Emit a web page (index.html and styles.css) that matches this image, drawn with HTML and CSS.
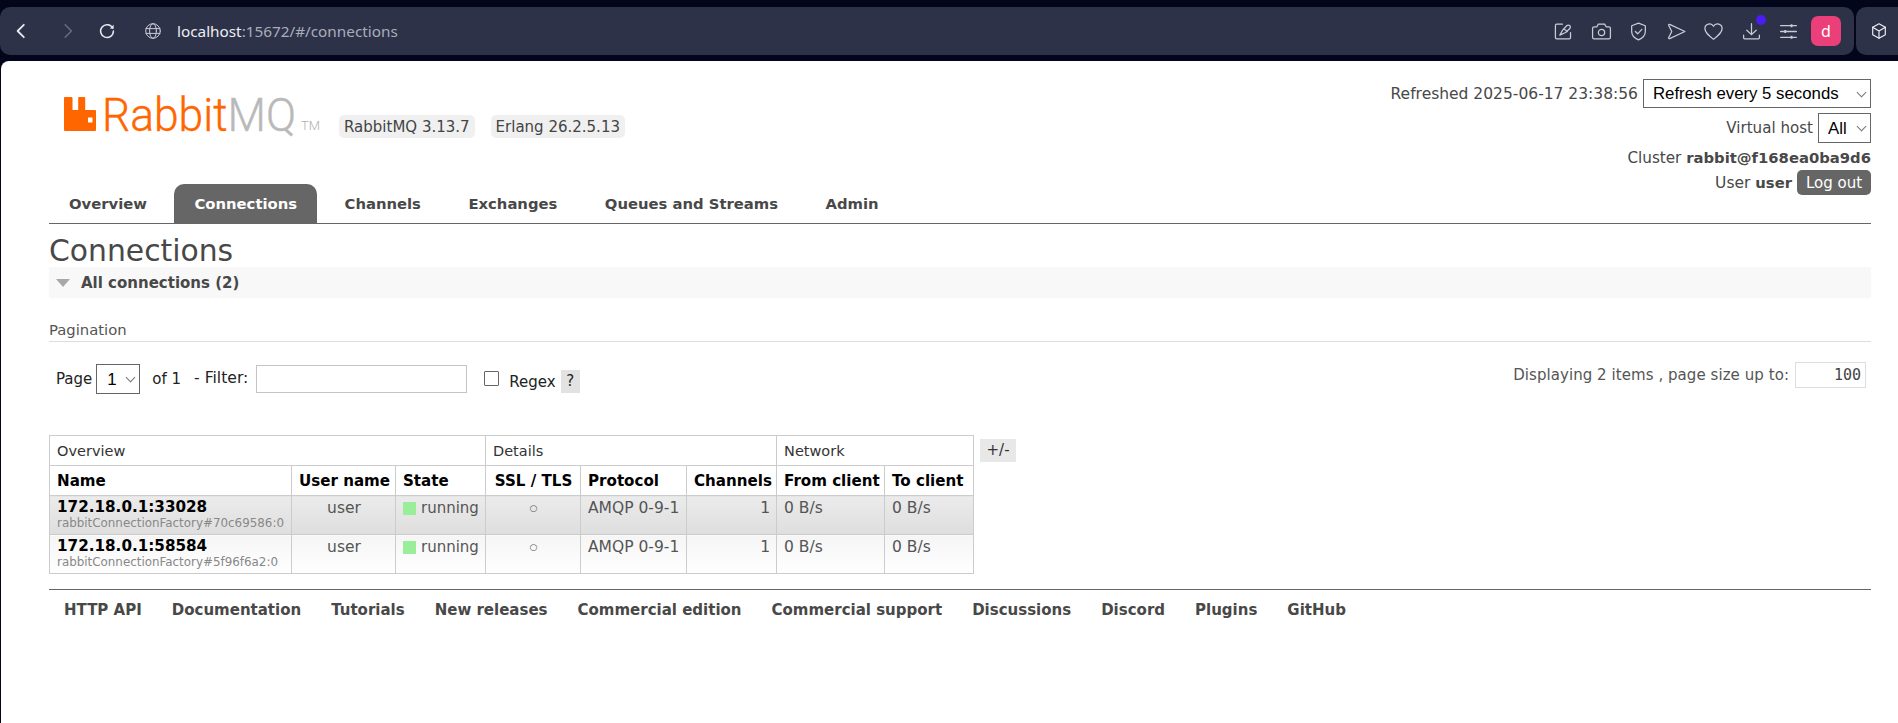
FILE: index.html
```html
<!DOCTYPE html>
<html lang="en">
<head>
<meta charset="utf-8">
<title>RabbitMQ Management</title>
<link rel="stylesheet" href="styles.css">
</head>
<body>
<div class="chrome">
  <div class="toolbar">
    <div class="nav-btns">
      <svg class="ic ic-back" viewBox="0 0 16 16"><path d="M10.5 2.5 5 8l5.5 5.5"/></svg>
      <svg class="ic ic-fwd" viewBox="0 0 16 16"><path d="M5.5 2.5 11 8l-5.5 5.5"/></svg>
      <svg class="ic ic-reload" viewBox="0 0 18 18"><path d="M14.6 6A6.4 6.4 0 1 0 15.4 9"/><path class="solid" d="M11.8 6.4 15.6 6.8 15.6 2.8Z"/></svg>
      <svg class="ic ic-globe" viewBox="0 0 18 18"><circle cx="9" cy="9" r="7.3"/><ellipse cx="9" cy="9" rx="3.4" ry="7.3"/><path d="M2 6.6h14M2 11.4h14"/></svg>
    </div>
    <div class="url"><span class="url-host">localhost</span>:15672/#/connections</div>
    <div class="tools">
      <svg class="ic" viewBox="0 0 20 20"><path d="M9 3H3.5A1.2 1.2 0 0 0 2.3 4.2v11.6A1.2 1.2 0 0 0 3.5 17h12a1.2 1.2 0 0 0 1.2-1.2V11"/><path d="M6.5 13.5 9 9l4-4.5a2 2 0 0 1 3 2.7L12 11l-5.500 2.500Z"/><path d="M10.500 7.500l3 2.500"/></svg>
      <svg class="ic" viewBox="0 0 20 20"><path d="M3 5.500h2.600L7 3h6l1.400 2.500H17a1.500 1.500 0 0 1 1.500 1.500v8.500A1.500 1.500 0 0 1 17 17H3a1.500 1.500 0 0 1-1.500-1.500V7A1.500 1.500 0 0 1 3 5.500Z"/><circle cx="10" cy="11" r="3"/></svg>
      <svg class="ic" viewBox="0 0 20 20"><path d="M10 2 3.500 4.500v5.500c0 4 3 6.500 6.500 8 3.500-1.500 6.500-4 6.500-8V4.500Z"/><path d="m7 10 2.200 2.200L13.200 8"/></svg>
      <svg class="ic" viewBox="0 0 20 20"><path d="M3.500 3.200c-.6-.3-1.200.3-1 .9L5.500 10l-3 5.900c-.2.6.4 1.200 1 .9L18 10Z"/></svg>
      <svg class="ic" viewBox="0 0 20 20"><path d="M10 17.500C5 13.500 1.800 10.800 1.800 7.200A4.400 4.400 0 0 1 10 5a4.400 4.400 0 0 1 8.200 2.200c0 3.600-3.200 6.300-8.200 10.300Z"/></svg>
      <span class="dl">
        <svg class="ic" viewBox="0 0 20 20"><path d="M10 2.500V13M5.500 8.800 10 13l4.500-4.200M2.500 13.500V16a1 1 0 0 0 1 1h13a1 1 0 0 0 1-1v-2.500"/></svg>
        <i class="dl-dot"></i>
      </span>
      <svg class="ic" viewBox="0 0 20 20"><path d="M2.500 4.500h15M2.500 10h15M2.500 15.500h15"/><path class="solid" d="M12 3h1.800v3H12ZM6 8.500h1.800v3H6ZM12 14h1.800v3H12Z"/></svg>
      <div class="avatar">d</div>
    </div>
  </div>
  <div class="toolbar-ext">
    <svg class="ic ic-cube" viewBox="0 0 20 20"><path d="M10 2 17 5.800v8.400L10 18l-7-3.800V5.800Z"/><path d="M3 5.800 10 10l7-4.200M10 10v8"/></svg>
  </div>
</div>

<main class="page">
  <header class="head">
    <div class="brand">
      <svg class="logo" viewBox="0 -12 260 56">
        <path class="logo-mark" d="M1 0h6.500a1 1 0 0 1 1 1v12h5.700V1a1 1 0 0 1 1-1h5a1 1 0 0 1 1 1v12h9.800a1 1 0 0 1 1 1v19a1 1 0 0 1-1 1H1a1 1 0 0 1-1-1V1a1 1 0 0 1 1-1Zm23 20.500v5h4.500v-5Z"/>
        <text class="logo-word" x="38" y="34" textLength="194" lengthAdjust="spacingAndGlyphs"><tspan class="logo-r">Rabbit</tspan><tspan class="logo-m">MQ</tspan></text>
        <text class="logo-t" x="237" y="33" textLength="19" lengthAdjust="spacingAndGlyphs">TM</text>
      </svg>
      <span class="badge">RabbitMQ 3.13.7</span>
      <span class="badge">Erlang 26.2.5.13</span>
    </div>
    <div class="meta">
      <div class="meta-row meta-r1"><span class="txt">Refreshed 2025-06-17 23:38:56</span>
        <span class="sel-wrap"><select class="sel sel-refresh"><option>Refresh every 5 seconds</option></select></span></div>
      <div class="meta-row meta-r2"><span class="txt">Virtual host</span>
        <span class="sel-wrap"><select class="sel sel-vhost"><option>All</option></select></span></div>
      <div class="meta-row meta-r3"><span class="txt">Cluster <b>rabbit@f168ea0ba9d6</b></span></div>
      <div class="meta-row meta-r4"><span class="txt txt-user">User <b>user</b></span><button class="logout">Log out</button></div>
    </div>
  </header>

  <nav class="tabs">
    <a class="tab">Overview</a>
    <a class="tab tab-on">Connections</a>
    <a class="tab">Channels</a>
    <a class="tab">Exchanges</a>
    <a class="tab">Queues and Streams</a>
    <a class="tab">Admin</a>
  </nav>

  <h1 class="title">Connections</h1>
  <div class="section-bar"><i class="tri"></i><span>All connections (2)</span></div>

  <div class="pg-label">Pagination</div>
  <div class="controls">
    <div class="ctl-left">
      <span class="ctl-page">Page</span>
      <span class="sel-wrap"><select class="sel sel-page"><option>1</option></select></span>
      <span class="ctl-of">of 1</span>
      <span class="ctl-filter">- Filter:</span>
      <input class="ctl-input" type="text">
      <span class="ctl-check"></span>
      <span class="ctl-regex">Regex</span>
      <span class="ctl-help">?</span>
    </div>
    <div class="ctl-right">
      <span class="ctl-disp">Displaying 2 items , page size up to:</span>
      <input class="ctl-size" type="text" value="100">
    </div>
  </div>

  <div class="table-wrap">
    <table class="list">
      <colgroup>
        <col class="c1"><col class="c2"><col class="c3"><col class="c4"><col class="c5"><col class="c6"><col class="c7"><col class="c8">
      </colgroup>
      <thead>
        <tr class="group"><th colspan="3">Overview</th><th colspan="3">Details</th><th colspan="2">Network</th></tr>
        <tr class="cols"><th>Name</th><th class="ctr">User name</th><th>State</th><th class="ctr">SSL / TLS</th><th>Protocol</th><th class="ctr">Channels</th><th>From client</th><th>To client</th></tr>
      </thead>
      <tbody>
        <tr class="alt1">
          <td><b class="conn">172.18.0.1:33028</b><small class="sub">rabbitConnectionFactory#70c69586:0</small></td>
          <td class="ctr">user</td>
          <td><span class="state"><i class="dot"></i>running</span></td>
          <td class="ctr ring">○</td>
          <td>AMQP 0-9-1</td>
          <td class="rgt">1</td>
          <td>0 B/s</td>
          <td>0 B/s</td>
        </tr>
        <tr class="alt2">
          <td><b class="conn">172.18.0.1:58584</b><small class="sub">rabbitConnectionFactory#5f96f6a2:0</small></td>
          <td class="ctr">user</td>
          <td><span class="state"><i class="dot"></i>running</span></td>
          <td class="ctr ring">○</td>
          <td>AMQP 0-9-1</td>
          <td class="rgt">1</td>
          <td>0 B/s</td>
          <td>0 B/s</td>
        </tr>
      </tbody>
    </table>
    <span class="plusminus">+/-</span>
  </div>

  <footer class="foot">
    <a>HTTP API</a><a>Documentation</a><a>Tutorials</a><a>New releases</a><a>Commercial edition</a><a>Commercial support</a><a>Discussions</a><a>Discord</a><a>Plugins</a><a>GitHub</a>
  </footer>
</main>
</body>
</html>
```
FILE: styles.css
```css
* { box-sizing: border-box; }
html, body { margin: 0; height: 100%; }
body {
  background: #03061a;
  font-family: "DejaVu Sans", Verdana, sans-serif;
  font-size: 15px;
  color: #484848;
  overflow: hidden;
  display: flex;
  flex-direction: column;
}

/* browser chrome */
.chrome { display: flex; gap: 2px; padding-top: 7px; height: 61px; flex: none; padding-bottom: 6px; }
.toolbar {
  width: 1854px; background: #2e3249; border-radius: 10px;
  display: flex; align-items: center; padding-left: 12px;
}
.toolbar-ext { flex: 1; background: #2e3249; border-radius: 10px 0 0 10px; display: flex; align-items: center; padding-left: 14px; }
.ic { width: 18px; height: 18px; fill: none; stroke: #c9cbd5; stroke-width: 1.3; flex: none; stroke-linecap: round; stroke-linejoin: round; }
.ic .solid { fill: #c9cbd5; stroke: none; }
.nav-btns { display: flex; align-items: center; }
.ic-back { stroke: #e8e9ee; stroke-width: 1.6; }
.ic-fwd { stroke: #6a6e80; margin-left: 29px; }
.ic-reload { stroke: #e8e9ee; stroke-width: 1.5; margin-left: 21px; }
.ic-reload .solid { fill: #e8e9ee; }
.ic-globe { margin-left: 28px; stroke-width: 1; }
.url { margin-left: 15px; font-family: "Noto Sans", sans-serif; font-size: 15.300px; color: #a9adba; }
.url-host { color: #eceef3; }
.tools { margin-left: auto; display: flex; align-items: center; gap: 16.500px; padding-right: 13px; }
.tools .ic { width: 21px; height: 21px; stroke-width: 1.2; }
.dl { display: flex; position: relative; }
.dl-dot { position: absolute; left: 15px; top: -6px; width: 10px; height: 10px; border-radius: 50%; background: #4a1df0; }
.avatar {
  width: 30px; height: 30px; margin-left: -4.500px; border-radius: 7px; background: #ea3f78;
  color: #fff; font-family: "Noto Sans", sans-serif; font-size: 16px;
  display: flex; align-items: center; justify-content: center;
}
.ic-cube { stroke: #eef0f4; }

/* page */
.page { flex: 1; background: #fff; margin-left: 1px; border-radius: 8px 0 0 0; padding: 0 27px 0 48px; }

.head { display: flex; justify-content: space-between; align-items: flex-start; height: 123px; }
.brand { display: flex; align-items: flex-start; padding: 24px 0 0 15px; }
.logo { width: 260px; height: 56px; flex: none; }
.logo-mark { fill: #f60; }
.logo-word { font-family: "Roboto", "Liberation Sans", sans-serif; font-weight: 300; font-size: 46px; stroke-width: .4px; }
.logo-r { fill: #f60; stroke: #f60; }
.logo-m { fill: #b9b9b9; stroke: #b9b9b9; }
.logo-t { font-family: "Roboto", "Liberation Sans", sans-serif; font-weight: 300; font-size: 12px; fill: #b0b0b0; }
.badge {
  background: #f0f0f0; border-radius: 5px; height: 23px; line-height: 24px;
  padding: 0 5px; margin-top: 30px; font-size: 15px; color: #444;
}
.badge:first-of-type { margin-left: 15px; }
.badge + .badge { margin-left: 16px; }

.meta { display: flex; flex-direction: column; align-items: flex-end; padding-top: 18px; }
.meta-row { display: flex; flex: none; align-items: center; justify-content: flex-end; }
.txt { white-space: nowrap; font-size: 15.500px; }
.txt b { font-size: 14.800px; }
.meta-r1 { height: 29px; gap: 5px; }
.meta-r2 { height: 30px; gap: 5px; margin-top: 5px; }
.meta-r2 .txt { font-size: 15.100px; }
.meta-r3 { height: 20px; margin-top: 5px; }
.meta-r3 .txt { font-size: 15.200px; }
.meta-r4 { height: 25px; gap: 5px; margin-top: 2px; }
.txt-user { padding-top: 1px; }
.sel-wrap { display: inline-flex; position: relative; }
.sel-wrap::after {
  content: ""; position: absolute; right: 6px; top: 50%; width: 6px; height: 6px; margin-top: -5px;
  border-right: 1px solid #777; border-bottom: 1px solid #777; transform: rotate(45deg); pointer-events: none;
}
.sel {
  appearance: none; font-family: "Liberation Sans", Arial, sans-serif; font-size: 16.800px; color: #000;
  background: #fff; border: 1px solid #666; border-radius: 0; padding: 0 0 0 5px; margin: 0;
}
.sel-refresh { width: 228px; height: 29px; padding-left: 9px; }
.sel-vhost { width: 53px; height: 30px; padding-left: 9px; }
.logout {
  width: 74px; height: 25px; border: 0; border-radius: 5px; background: #666; color: #fff;
  font: 15px "DejaVu Sans", sans-serif; padding: 1px 0 0;
}

.tabs { display: flex; height: 40px; border-bottom: 1px solid #666; }
.tab {
  padding: 0 20px; margin-right: 7.500px;
  font-weight: 700; font-size: 14.800px; color: #484848; border-radius: 10px 10px 0 0; height: 39px;
  display: flex; align-items: center;
}
.tab-on { background: #666; color: #fff; }

.title { margin: 0; padding-top: 10px; height: 43px; font-weight: 400; font-size: 29.800px; line-height: 34px; color: #484848; }
.section-bar { height: 31px; background: #f8f8f8; display: flex; align-items: center; padding-left: 7px; font-weight: 700; font-size: 15px; color: #484848; }
.tri { width: 0; height: 0; border: 7px solid transparent; border-top: 8px solid #a8a8a8; border-bottom: 0; margin-right: 11px; }

.pg-label { margin-top: 20px; height: 24px; border-bottom: 1px solid #ddd; font-size: 14.800px; line-height: 23px; color: #555; }

.controls { display: flex; justify-content: space-between; margin-top: 20px; height: 73px; }
.ctl-left { display: flex; align-items: flex-start; padding: 2px 0 0 7px; font-size: 15px; color: #222; }
.ctl-page { line-height: 30px; margin-right: 4px; }
.sel-page { width: 44px; height: 30px; padding-left: 10px; border-color: #666; }
.ctl-of { line-height: 30px; margin-left: 12px; }
.ctl-filter { line-height: 28px; margin-left: 13px; font-size: 15.600px; }
.ctl-input { width: 211px; height: 28px; margin: 1px 0 0 8px; border: 1px solid #c4c4c4; background: #fff; }
.ctl-check { width: 15px; height: 15px; margin: 7px 0 0 17px; border: 1.500px solid #666; border-radius: 1px; }
.ctl-regex { margin: 7px 0 0 10px; line-height: 22px; }
.ctl-help { width: 19px; height: 23px; margin: 6px 0 0 5px; background: #e2e2e2; text-align: center; line-height: 23px; }
.ctl-right { display: flex; align-items: flex-start; padding-right: 5px; }
.ctl-disp { line-height: 26px; margin-right: 6px; font-size: 15px; letter-spacing: .06px; color: #555; }
.ctl-size { width: 71px; height: 26px; border: 1px solid #ddd; text-align: right; font: 15px "DejaVu Sans Mono", monospace; padding: 0 4px; color: #444; }

.table-wrap { display: flex; align-items: flex-start; }
.list { border-collapse: collapse; table-layout: fixed; width: 924px; flex: none; font-size: 15.500px; }
.c1 { width: 242px; } .c2 { width: 104px; } .c3 { width: 90px; } .c4 { width: 95px; }
.c5 { width: 106px; } .c6 { width: 90px; } .c7 { width: 108px; } .c8 { width: 89px; }
.list th, .list td { border: 1px solid #ccc; padding: 0 6px 0 7px; text-align: left; white-space: nowrap; }
.group th { height: 30px; font-weight: 400; font-size: 14.500px; color: #333; }
.cols th { height: 30px; font-weight: 700; color: #000; font-size: 15.100px; }
.list td { height: 39px; vertical-align: top; padding-top: 4px; color: #555; line-height: 17px; }
.list .ctr { text-align: center; }
.list .rgt { text-align: right; }
.list .ring { font-size: 9px; }
.alt1 td { background: linear-gradient(#ebebeb, #dedede); }
.alt2 td { background: linear-gradient(#f5f5f5, #fff); }
.conn { display: block; color: #000; font-size: 15.200px; line-height: 16px; margin: -1px 0 1px; }
.sub { display: block; color: #888; font-size: 11.900px; line-height: 15px; }
.state { display: flex; align-items: center; font-size: 15px; }
.dot { flex: none; width: 13px; height: 13px; background: #99ee99; margin-right: 5px; }
.plusminus { margin: 4px 0 0 6px; width: 36px; height: 23px; background: #e8e8e8; text-align: center; line-height: 23px; font-size: 15px; color: #333; }

.foot { display: flex; gap: 30px; margin-top: 15px; border-top: 1px solid #666; padding: 10px 0 0 15px; font-weight: 700; font-size: 15px; line-height: 20px; color: #484848; }
```
